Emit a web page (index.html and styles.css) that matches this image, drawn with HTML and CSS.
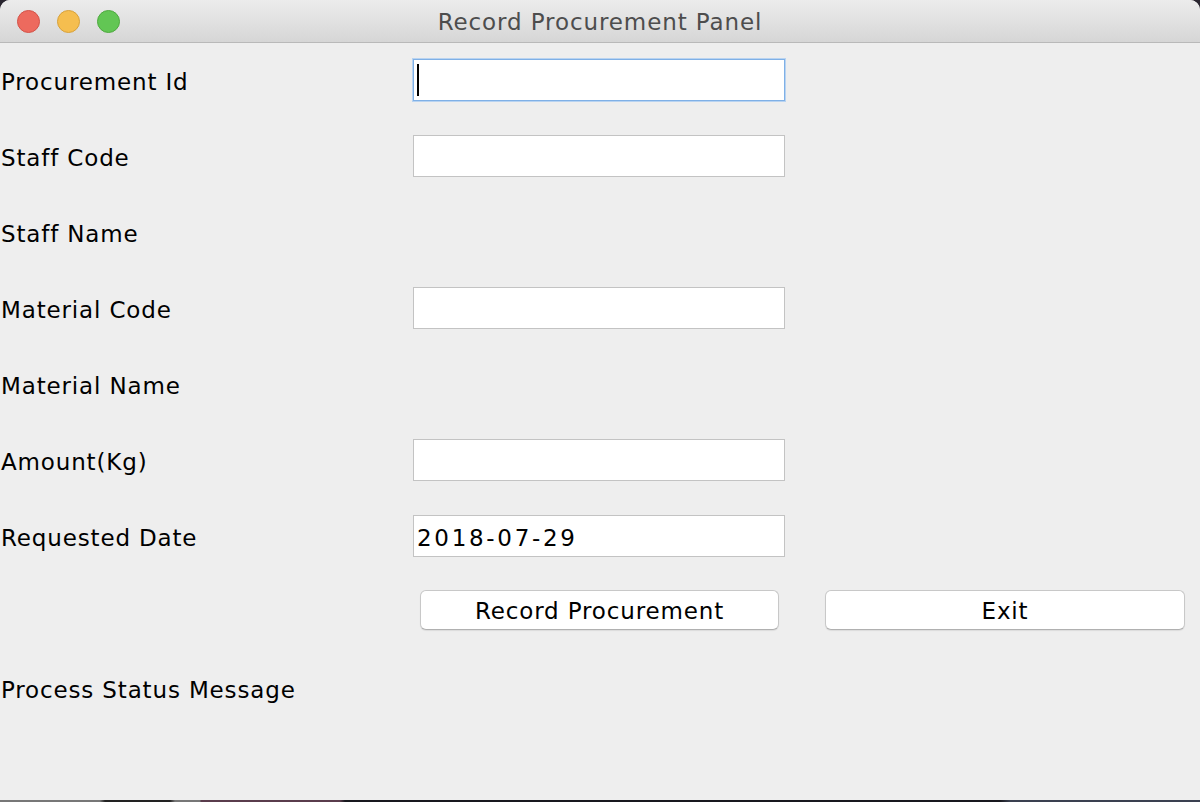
FILE: index.html
```html
<!DOCTYPE html>
<html>
<head>
<meta charset="utf-8">
<link rel="stylesheet" href="styles.css">
</head>
<body>
<div class="window">
  <div class="titlebar">
    <div class="lights">
      <span class="light red"></span>
      <span class="light yellow"></span>
      <span class="light green"></span>
    </div>
    <div class="title">Record Procurement Panel</div>
  </div>
  <div class="content">
    <div class="row"><div class="label">Procurement Id</div><div class="field focused"><span class="caret"></span></div></div>
    <div class="row"><div class="label">Staff Code</div><div class="field"></div></div>
    <div class="row"><div class="label">Staff Name</div></div>
    <div class="row"><div class="label">Material Code</div><div class="field"></div></div>
    <div class="row"><div class="label">Material Name</div></div>
    <div class="row"><div class="label">Amount(Kg)</div><div class="field"></div></div>
    <div class="row"><div class="label">Requested Date</div><div class="field date">2018-07-29</div></div>
    <div class="buttons">
      <div class="btn record">Record Procurement</div>
      <div class="btn exit">Exit</div>
    </div>
    <div class="status">Process Status Message</div>
  </div>
  <div class="desk"></div>
</div>
</body>
</html>
```
FILE: styles.css
```css
html, body {
  margin: 0;
  padding: 0;
  background: #2a2630;
}
.window {
  width: 1200px;
  height: 802px;
  background: #eeeeee;
  border-radius: 10px 10px 0 0;
  overflow: hidden;
  display: flex;
  flex-direction: column;
  font-family: "DejaVu Sans", "Liberation Sans", sans-serif;
  color: #000;
}
.titlebar {
  height: 43px;
  flex: none;
  box-sizing: border-box;
  border-bottom: 1px solid #b9b9b9;
  background: linear-gradient(#ececec, #d6d6d6);
  display: flex;
  align-items: center;
  justify-content: center;
  position: relative;
}
.lights {
  position: absolute;
  left: 17px;
  top: 10px;
  display: flex;
  gap: 17px;
}
.light {
  width: 23px;
  height: 23px;
  border-radius: 50%;
  box-sizing: border-box;
}
.red { background: #ed6a5e; border: 1px solid #d35248; }
.yellow { background: #f5be4f; border: 1px solid #d7a13b; }
.green { background: #62c654; border: 1px solid #4ea93f; }
.title {
  font-size: 23px;
  color: #4d4d4d;
  letter-spacing: 0.9px;
  margin-top: 1px;
}
.content {
  flex: 1;
  display: flex;
  flex-direction: column;
  margin-top: -1px;
}
.row {
  height: 76px;
  display: flex;
  align-items: center;
}
.label {
  width: 412px;
  padding-left: 1px;
  padding-top: 3px;
  font-size: 23px;
  letter-spacing: 0.85px;
}
.field {
  width: 372px;
  height: 42px;
  box-sizing: border-box;
  background: #fff;
  border: 1px solid #c3c3c3;
  font-size: 23px;
  letter-spacing: 0.85px;
  display: flex;
  align-items: center;
  padding-left: 3px;
  padding-top: 3px;
}
.field.date {
  letter-spacing: 2.7px;
}
.field.focused {
  border: 1px solid #7fb0e6;
  box-shadow: 0 0 0 1px #b8d3f1;
  padding-top: 0;
}
.caret {
  display: block;
  width: 2px;
  height: 32px;
  background: #000;
}
.buttons {
  display: flex;
  padding-left: 420px;
  gap: 46px;
  margin-top: 16px;
}
.btn {
  height: 40px;
  box-sizing: border-box;
  background: #fff;
  border: 1px solid #c8c8c8;
  border-bottom-color: #b0b0b0;
  border-radius: 6px;
  box-shadow: 0 1px 1px rgba(0,0,0,0.08);
  font-size: 23px;
  letter-spacing: 0.85px;
  display: flex;
  align-items: center;
  justify-content: center;
  padding-top: 2px;
}
.record { width: 359px; }
.exit { width: 360px; }
.status {
  font-size: 23px;
  letter-spacing: 0.85px;
  padding-left: 1px;
  margin-top: 47px;
}
.desk {
  margin-top: auto;
  height: 2px;
  flex: none;
  background: linear-gradient(90deg, #777 0, #777 100px, #222 105px, #222 170px, #777 175px, #777 200px, #5a3c4c 201px, #5a3c4c 340px, #18181e 345px, #18181e 1000px, #3a4050 1010px, #3a4050 1200px);
}
```
